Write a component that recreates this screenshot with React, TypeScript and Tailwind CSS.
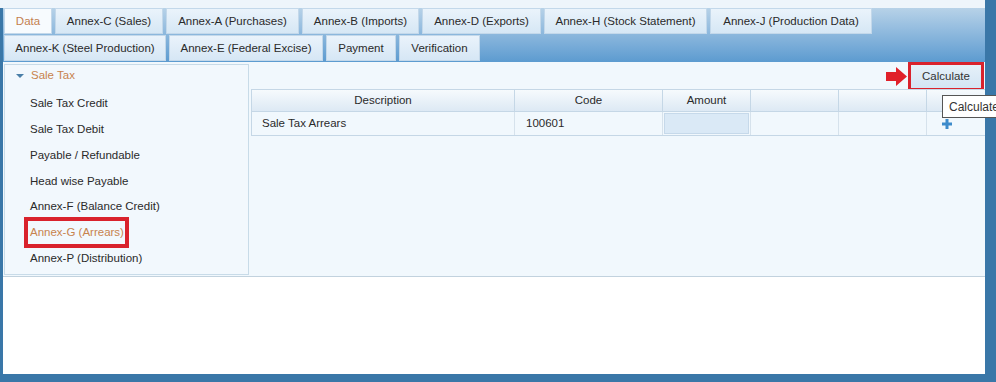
import React from 'react';

const row1 = [
  { label: 'Data', w: 'w-[48px]', active: true },
  { label: 'Annex-C (Sales)', w: 'w-[108px]' },
  { label: 'Annex-A (Purchases)', w: 'w-[133px]' },
  { label: 'Annex-B (Imports)', w: 'w-[117px]' },
  { label: 'Annex-D (Exports)', w: 'w-[119px]' },
  { label: 'Annex-H (Stock Statement)', w: 'w-[163px]' },
  { label: 'Annex-J (Production Data)', w: 'w-[162px]' },
];

const row2 = [
  { label: 'Annex-K (Steel Production)', w: 'w-[162px]' },
  { label: 'Annex-E (Federal Excise)', w: 'w-[154px]' },
  { label: 'Payment', w: 'w-[70px]' },
  { label: 'Verification', w: 'w-[81px]' },
];

const menu = [
  'Sale Tax Credit',
  'Sale Tax Debit',
  'Payable / Refundable',
  'Head wise Payable',
  'Annex-F (Balance Credit)',
  'Annex-G (Arrears)',
  'Annex-P (Distribution)',
];

function Tab({ label, w, active }: { label: string; w: string; active?: boolean }) {
  return (
    <div
      className={`${w} h-[26px] flex items-center justify-center pt-[2px] border border-[#c3d8ea] text-[11.5px] ${
        active
          ? 'bg-[#f7fbfe] text-[#c4804f]'
          : 'bg-gradient-to-b from-[#eaf3fb] to-[#d6e7f5] text-[#2a2a2a]'
      }`}
    >
      {label}
    </div>
  );
}

export default function App() {
  return (
    <div
      className="relative w-[996px] h-[382px] bg-[#3a77a8] flex flex-col overflow-hidden"
      style={{ fontFamily: '"Liberation Sans", Arial, sans-serif' }}
    >
      <div className="w-[985px] flex flex-col">
        {/* top light strip */}
        <div className="h-[8px] bg-[#eef5fb]" />
        <div className="pl-[3px] flex flex-col">
          {/* tab bar */}
          <div className="h-[54px] bg-gradient-to-b from-[#b7d2e8] to-[#5c9bd0] pl-[1px] flex flex-col gap-[1px]">
            <div className="flex gap-[3px]">
              {row1.map((t) => (
                <Tab key={t.label} {...t} />
              ))}
            </div>
            <div className="flex gap-[3px]">
              {row2.map((t) => (
                <Tab key={t.label} {...t} />
              ))}
            </div>
          </div>

          {/* content panel */}
          <div className="h-[215px] bg-[#f1f8fd] border-b border-[#c2d2de] flex pt-[2px] pl-[1px]">
            {/* sidebar */}
            <div className="w-[245px] h-[211px] border border-[#c8dbe8] bg-[#f2f8fd] flex flex-col">
              <div className="h-[22px] flex items-center pl-[11px] gap-[7px]">
                <svg width="8" height="6" viewBox="0 0 8 6">
                  <path d="M0 1 L8 1 L4 5 Z" fill="#4a7fa8" />
                </svg>
                <span className="text-[11.5px] text-[#c8834e]">Sale Tax</span>
              </div>
              <div className="flex flex-col pt-[4px]">
                {menu.map((m) => (
                  <div key={m} className="h-[25.8px] flex items-center pl-[25px]">
                    {m === 'Annex-G (Arrears)' ? (
                      <span className="-ml-[6px] border-[4px] border-[#d9222c] pl-[2px] pr-[1px] h-[31px] flex items-center text-[11.5px] text-[#c8834e]">
                        {m}
                      </span>
                    ) : (
                      <span className="text-[11.5px] text-[#2a2a2a]">{m}</span>
                    )}
                  </div>
                ))}
              </div>
            </div>

            {/* right area */}
            <div className="flex-1 flex flex-col pl-[2px]">
              <div className="h-[27px] flex items-start justify-end pr-[1px] -mt-[2px] gap-[1px]">
                <svg width="21" height="19" viewBox="0 0 21 19" className="mt-[5px]">
                  <path d="M0 5 L10 5 L10 0 L21 9.5 L10 19 L10 14 L0 14 Z" fill="#e0202a" />
                </svg>
                <div className="border-[3px] border-[#d9222c] h-[29px] w-[76px] flex">
                  <div className="flex-1 bg-gradient-to-b from-[#e6f0f9] to-[#d3e5f4] flex items-center justify-center text-[11.5px] text-[#333]">
                    Calculate
                  </div>
                </div>
              </div>
              <div className="border-l border-t border-[#c5d7e6]">
                <div className="flex h-[22px] bg-gradient-to-b from-[#f6fafd] to-[#dde9f4] border-b border-[#c5d7e6] text-[11.5px] text-[#2a2a2a]">
                  <div className="w-[263px] border-r border-[#c5d7e6] flex items-center justify-center">Description</div>
                  <div className="w-[148px] border-r border-[#c5d7e6] flex items-center justify-center">Code</div>
                  <div className="w-[88px] border-r border-[#c5d7e6] flex items-center justify-center">Amount</div>
                  <div className="w-[88px] border-r border-[#c5d7e6]" />
                  <div className="w-[88px] border-r border-[#c5d7e6]" />
                  <div className="flex-1" />
                </div>
                <div className="flex h-[24px] border-b border-[#c5d7e6] text-[11.5px] text-[#2a2a2a]">
                  <div className="w-[263px] border-r border-[#d6e2ec] flex items-center pl-[10px]">Sale Tax Arrears</div>
                  <div className="w-[148px] border-r border-[#d6e2ec] flex items-center pl-[11px]">100601</div>
                  <div className="w-[88px] border-r border-[#d6e2ec] p-[1px]">
                    <div className="w-full h-full bg-[#dae9f6] border border-[#c6d9ea]" />
                  </div>
                  <div className="w-[88px] border-r border-[#d6e2ec]" />
                  <div className="w-[88px] border-r border-[#d6e2ec]" />
                  <div className="flex-1 flex items-center pl-[15px]">
                    <svg width="10" height="10" viewBox="0 0 10 10">
                      <path d="M3.5 0 H6.5 V3.5 H10 V6.5 H6.5 V10 H3.5 V6.5 H0 V3.5 H3.5 Z" fill="#3d8bcb" />
                    </svg>
                  </div>
                </div>
              </div>
            </div>
          </div>

          {/* white lower area */}
          <div className="h-[97px] bg-white" />
        </div>
      </div>

      {/* tooltip */}
      <div className="absolute left-[942px] top-[95px] h-[23px] px-[6px] bg-white border border-[#555] flex items-center text-[12px] text-[#333] whitespace-nowrap">
        Calculate
      </div>
    </div>
  );
}
